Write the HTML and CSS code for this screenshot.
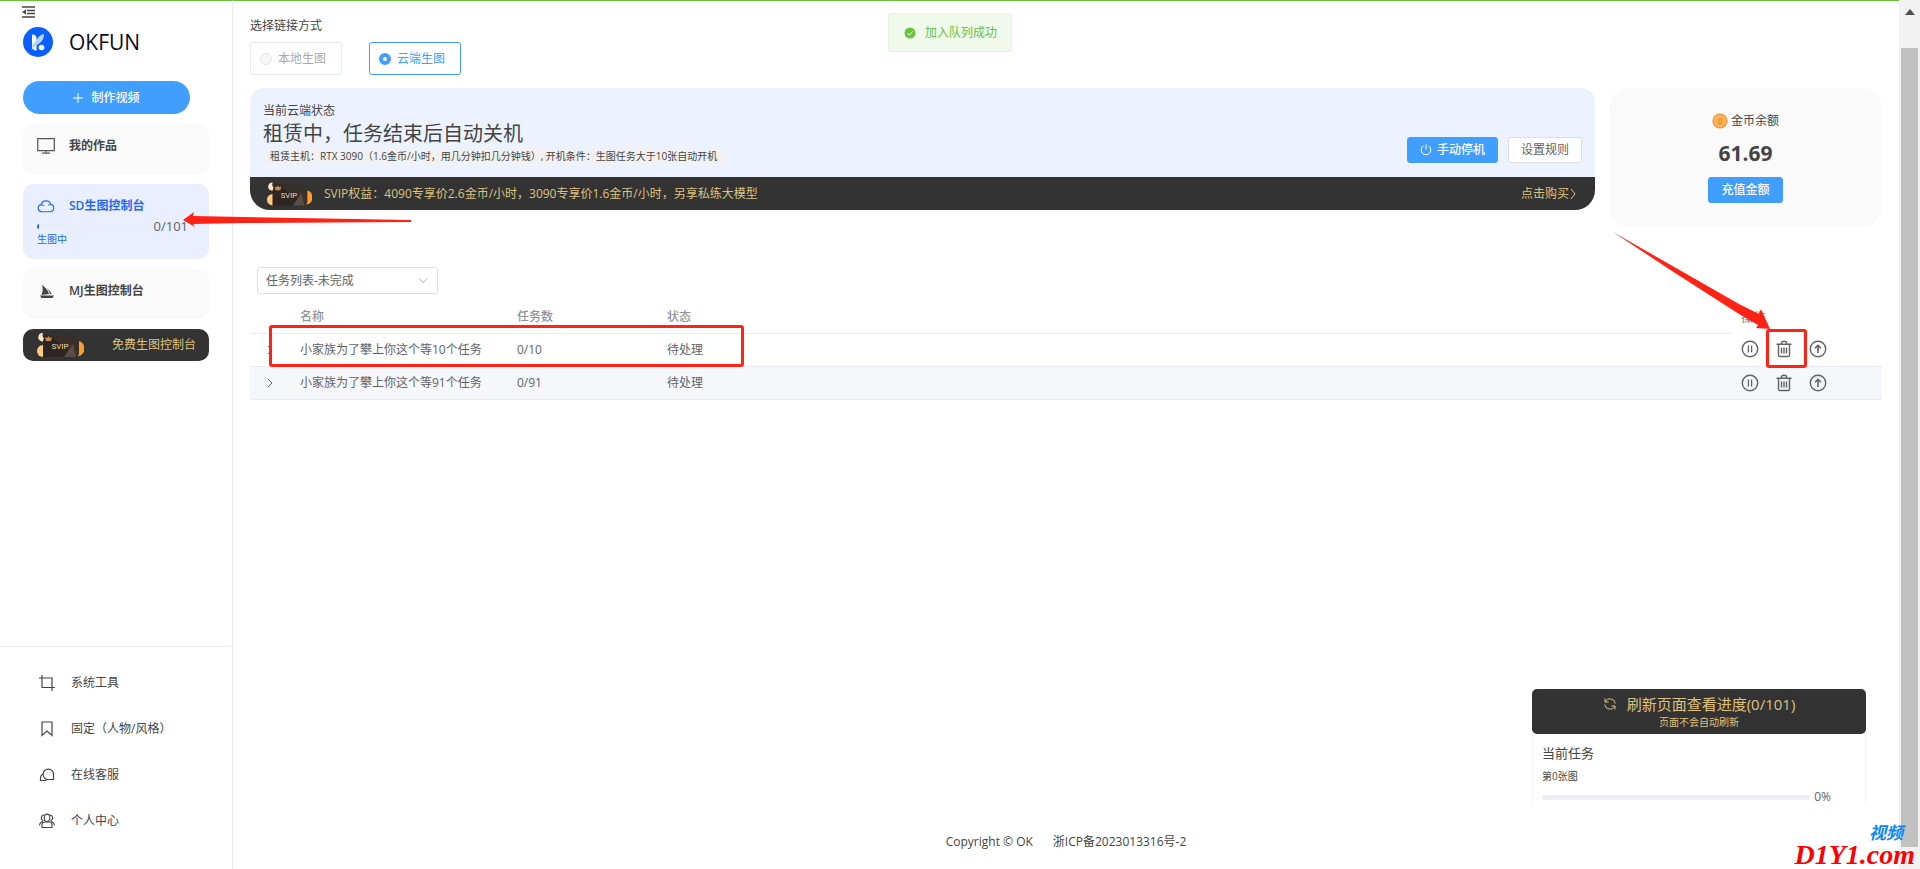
FILE: index.html
```html
<!DOCTYPE html>
<html lang="zh-CN">
<head>
<meta charset="utf-8">
<title>OKFUN</title>
<link rel="stylesheet" href="styles.css">
</head>
<body>
<svg width="0" height="0" class="defs" aria-hidden="true">
  <defs>
    <symbol id="svip" viewBox="0 0 48 26">
      <path d="M1 19a6 6 0 0 1 6-6v12a6 6 0 0 1-6-6z" fill="#ffcb7d"/>
      <path d="M7 1a4.200 4.200 0 1 0 3 6.500a4.500 4.500 0 0 1-3-6.500z" fill="#ffe3bd"/>
      <path d="M42 9a6 7 0 0 1 0 15z" fill="#ff9d2b"/>
      <path d="M9 3h29l5 6v13l-3 3H7V9z" fill="#2d2521"/>
      <path d="M14 3h24l5 6v13l-3 3z" fill="#3a302b"/>
      <path d="M37 12l-9 13h12z" fill="#5a4e48"/>
      <path d="M9 5l2 1 1.500-2 1.500 2 2-1-1 4H10z" fill="#c78b4a"/>
      <text x="24" y="17" text-anchor="middle" font-size="8" font-family="Roboto, sans-serif" fill="#f5d5a4">SVIP</text>
    </symbol>
    <symbol id="pause" viewBox="0 0 18 18">
      <g fill="none" stroke="#606266"><circle cx="9" cy="9" r="7.700" stroke-width="1.400"/><path d="M7.400 5.500v7M10.600 5.500v7" stroke-width="1.300"/></g>
    </symbol>
    <symbol id="trash" viewBox="0 0 18 18">
      <path d="M1.500 4.300h15M6.500 4V3a2.500 1.800 0 0 1 5 0V4M3.500 5v10.200a1.300 1.300 0 0 0 1.300 1.300h8.400a1.300 1.300 0 0 0 1.300-1.300V5M6.500 7.500v6M9 7.500v6M11.500 7.500v6" fill="none" stroke="#606266" stroke-width="1.400"/>
    </symbol>
    <symbol id="up" viewBox="0 0 18 18">
      <g fill="none" stroke="#606266"><circle cx="9" cy="9" r="7.700" stroke-width="1.400"/><path d="M9 13V5.500M6 8.300L9 5.300l3 3" stroke-width="1.600"/></g>
    </symbol>
  </defs>
</svg>
<div class="app">
  <aside class="sidebar">
    <button class="collapse" aria-label="收起菜单"><svg width="14" height="12" viewBox="0 0 14 12"><path d="M0 1h13M5 4.500h8M5 7.500h8M0 11h13" stroke="#444" stroke-width="1.400"/><path d="M0 6l4-2.500v5z" fill="#444"/></svg></button>
    <div class="brand">
      <svg width="30" height="30" viewBox="0 0 30 30"><circle cx="15" cy="15" r="15" fill="#0a5fff"/><path d="M9 7.500c2.500 0 4.500 1 4.500 3.500v12.500C10.500 23.500 9 22 9 20z" fill="#fff"/><path d="M21 7c0 6-3 9-11.500 14v-4C14 14 15 8 21 7z" fill="#b9d2ff"/><circle cx="18.500" cy="20.500" r="2.800" fill="#fff"/></svg>
      <span>OKFUN</span>
    </div>
    <button class="make"><svg width="10" height="10" viewBox="0 0 10 10"><path d="M5 0v10M0 5h10" stroke="#fff"/></svg>制作视频</button>
    <nav class="cards">
      <a class="card" href="#"><svg class="card-icon" width="18" height="16" viewBox="0 0 18 16"><path d="M.700.700h16.600v12H.700zM9 13v2M5 15.200h8" fill="none" stroke="#555" stroke-width="1.200"/></svg><span class="card-title">我的作品</span></a>
      <a class="card card-active" href="#">
        <svg class="card-icon" width="18" height="14" viewBox="0 0 18 14"><path d="M4.500 12.700a3.600 3.600 0 0 1-.500-7.100a5.200 5.200 0 0 1 9.900-.300a3.800 3.800 0 0 1-.200 7.400zM4 5.700a4 4 0 0 1 3 1.300M13.900 5.300a3 3 0 0 0-2.500 1" fill="none" stroke="#2468f2" stroke-width="1.100"/></svg><span class="card-title">SD生图控制台</span>
        <span class="queue"><span class="queue-track"><span class="queue-fill"></span></span>0/101</span>
        <span class="queue-state">生图中</span>
      </a>
      <a class="card" href="#"><svg class="card-icon" width="18" height="16" viewBox="0 0 18 16"><path d="M5 2c3 2 6 5 7 9L4.500 12C6 9 6 5 5 2zM10 5c2 2 4 4 4.500 6H13c-.500-2-1.500-4-3-6zM3 12.500h14L15.500 15h-11z" fill="#444"/></svg><span class="card-title">MJ生图控制台</span></a>
      <a class="free" href="#"><svg width="48" height="26"><use href="#svip"/></svg><span>免费生图控制台</span></a>
    </nav>
    <nav class="tools">
      <a href="#"><svg width="16" height="16" viewBox="0 0 16 16"><path d="M3 0v12.500h13M0 3h13V16" fill="none" stroke="#444" stroke-width="1.200"/></svg>系统工具</a>
      <a href="#"><svg width="16" height="16" viewBox="0 0 16 16"><path d="M3 1h10v13.500l-5-4.500-5 4.500z" fill="none" stroke="#444" stroke-width="1.200"/></svg>固定（人物/风格）</a>
      <a href="#"><svg width="16" height="16" viewBox="0 0 16 16"><path d="M14.500 12.500h-5.500a5.200 5.200 0 1 1 5.500-5.200zM4 7c-2 1-2.800 3-2.500 6.500h4.500c1 0 1.500-.500 2-1.200" fill="none" stroke="#444" stroke-width="1.200"/></svg>在线客服</a>
      <a href="#"><svg width="16" height="16" viewBox="0 0 16 16"><g fill="none" stroke="#444" stroke-width="1.100"><ellipse cx="8" cy="4.800" rx="2.800" ry="3.700"/><path d="M5.500 2a2.800 2.800 0 0 0-1 5.500M10.500 2a2.800 2.800 0 0 1 1 5.500M3 14.500V12a3 3 0 0 1 3-3h4a3 3 0 0 1 3 3v2.500zM.600 12.500c0-2 1-3.500 3.400-4M15.400 12.500c0-2-1-3.500-3.400-4"/></g></svg>个人中心</a>
    </nav>
  </aside>

  <main class="main">
    <div class="label" id="link-mode">选择链接方式</div>
    <div class="radios" role="radiogroup" aria-labelledby="link-mode">
      <label class="radio radio-off"><input type="radio" name="mode" disabled>本地生图</label>
      <label class="radio radio-on"><input type="radio" name="mode" checked>云端生图</label>
    </div>

    <div class="top">
      <section class="status">
        <div class="status-body">
          <div class="status-text">
            <p class="label">当前云端状态</p>
            <h1>租赁中，任务结束后自动关机</h1>
            <p class="host">租赁主机：RTX 3090（1.6金币/小时，用几分钟扣几分钟钱）, 开机条件：生图任务大于10张自动开机</p>
          </div>
          <div class="status-actions">
            <button class="btn btn-primary btn-stop"><svg width="12" height="12" viewBox="0 0 12 12"><path d="M6 .500v5M3.500 1.800a4.800 4.800 0 1 0 5 0" fill="none" stroke="#fff"/></svg>手动停机</button>
            <button class="btn">设置规则</button>
          </div>
        </div>
        <div class="svip-bar">
          <svg width="46" height="26"><use href="#svip"/></svg>
          <span>SVIP权益：4090专享价2.6金币/小时，3090专享价1.6金币/小时，另享私练大模型</span>
          <a href="#">点击购买<svg width="8" height="10" viewBox="0 0 8 10"><path d="M2 0l4 5-4 5" fill="none" stroke="#dfc27d"/></svg></a>
        </div>
      </section>
      <section class="coins">
        <div class="coins-label"><svg width="16" height="16" viewBox="0 0 16 16"><circle cx="8" cy="8" r="7.600" fill="#f7953b"/><circle cx="8" cy="8" r="5.500" fill="#ffad4d" stroke="#ffc777"/><text x="8" y="11" text-anchor="middle" font-size="8" font-family="Roboto, sans-serif" fill="#f07e1b">$</text></svg>金币余额</div>
        <strong>61.69</strong>
        <button class="btn btn-primary">充值金额</button>
      </section>
    </div>

    <div class="filter">
      <select aria-label="任务列表"><option>任务列表-未完成</option></select>
      <svg width="10" height="6" viewBox="0 0 10 6"><path d="M1 .500l4 4 4-4" fill="none" stroke="#a8abb2"/></svg>
    </div>

    <table class="tasks">
      <colgroup><col class="c-expand"><col class="c-name"><col class="c-count"><col><col class="c-ops"></colgroup>
      <thead><tr><th></th><th>名称</th><th>任务数</th><th>状态</th><th>操作</th></tr></thead>
      <tbody>
        <tr><td><button class="icon" aria-label="展开"><svg width="8" height="10" viewBox="0 0 8 10"><path d="M2 1l4 4-4 4" fill="none" stroke="#606266"/></svg></button></td><td>小家族为了攀上你这个等10个任务</td><td>0/10</td><td>待处理</td>
          <td><div class="ops"><button class="icon" aria-label="暂停"><svg width="18" height="18"><use href="#pause"/></svg></button><button class="icon" aria-label="删除"><svg width="18" height="18"><use href="#trash"/></svg></button><button class="icon" aria-label="置顶"><svg width="18" height="18"><use href="#up"/></svg></button></div></td></tr>
        <tr><td><button class="icon" aria-label="展开"><svg width="8" height="10" viewBox="0 0 8 10"><path d="M2 1l4 4-4 4" fill="none" stroke="#606266"/></svg></button></td><td>小家族为了攀上你这个等91个任务</td><td>0/91</td><td>待处理</td>
          <td><div class="ops"><button class="icon" aria-label="暂停"><svg width="18" height="18"><use href="#pause"/></svg></button><button class="icon" aria-label="删除"><svg width="18" height="18"><use href="#trash"/></svg></button><button class="icon" aria-label="置顶"><svg width="18" height="18"><use href="#up"/></svg></button></div></td></tr>
      </tbody>
    </table>

    <footer class="footer"><span>Copyright © OK</span><a href="#">浙ICP备2023013316号-2</a></footer>
  </main>

  <div class="scroll" aria-hidden="true">
    <svg width="10" height="6" viewBox="0 0 10 6"><path d="M0 6L5 0l5 6z" fill="#505050"/></svg>
    <div class="thumb"></div>
  </div>
</div>

<div class="toast" role="status"><svg width="12" height="12" viewBox="0 0 12 12"><circle cx="6" cy="6" r="5.500" fill="#67c23a"/><path d="M3.300 6.200l2 2 3.500-3.800" fill="none" stroke="#fff"/></svg>加入队列成功</div>

<section class="progress-panel">
  <button class="refresh"><span class="refresh-main"><svg width="14" height="14" viewBox="0 0 14 14"><path d="M2 1.500V5h3.500M2.300 4.800A5.300 5.300 0 0 1 12.300 6.500M12 12.500V9H8.500M11.700 9.200A5.300 5.300 0 0 1 1.700 7.500" fill="none" stroke="#dfc27d"/></svg>刷新页面查看进度(0/101)</span><small>页面不会自动刷新</small></button>
  <div class="panel-body">
    <h2>当前任务</h2>
    <p>第0张图</p>
    <div class="percent"><span class="percent-track"></span>0%</div>
  </div>
</section>

<div class="mark mark-row"></div>
<div class="mark mark-trash"></div>
<svg class="arrow arrow-left" width="230" height="16" viewBox="0 0 230 16"><path d="M0 8L11 0l-1 4 52 1 166 3v2L62 11l-52 1 2 3z" fill="#ff2315"/></svg>
<svg class="arrow arrow-right" width="160" height="100" viewBox="0 0 160 100"><path d="M1 1L127 73l20 10 2-5 9 20-14-1 2-3-19-11L60 40z" fill="#ff2315"/></svg>
<div class="watermark"><span class="wm-top">视频</span><span class="wm-main">D1Y1.com</span></div>
</body>
</html>
```
FILE: styles.css
```css
* { box-sizing: border-box; }
body {
  margin: 0;
  position: relative;
  background: #fff;
  color: #444;
  font-family: "Open Sans", "Noto Sans CJK SC", sans-serif;
  font-size: 12px;
  line-height: 16px;
  overflow: hidden;
}
a { color: inherit; text-decoration: none; }
p, h1, h2 { margin: 0; font-weight: 400; }
button, select { font: inherit; color: inherit; margin: 0; }
svg { display: block; flex: none; }
.defs { position: absolute; }

.app { display: flex; height: 100vh; }

.sidebar {
  width: 233px;
  flex: none;
  display: flex;
  flex-direction: column;
  border-right: 1px solid #e8ebf7;
  border-top: 1px solid #67c23a;
}
.collapse { margin: 5px 0 0 22px; padding: 0; border: 0; background: none; width: 14px; }
.brand { display: flex; align-items: center; gap: 16px; margin: 9px 0 0 23px; color: #0b0b20; font-size: 21px; line-height: 30px; }
.make {
  display: flex; align-items: center; justify-content: center; gap: 8px;
  width: 167px; height: 33px; margin: 24px 0 0 23px;
  border: 0; border-radius: 17px; background: #409eff; color: #fff; font-weight: 500;
}
.cards { display: flex; flex-direction: column; gap: 10px; margin: 10px 23px 0; }
.card {
  display: grid; grid-template-columns: 18px 1fr; column-gap: 14px;
  align-content: start; align-items: center;
  min-height: 50px; padding: 14px; border-radius: 10px; background: #fafafa;
}
.card-title { font-weight: 600; }
.card-active { min-height: 75px; background: #e9efff; color: #2468f2; }
.queue { grid-column: 1 / -1; display: flex; align-items: center; gap: 4px; margin-top: 4px; padding-right: 7px; color: #606266; font-size: 13px; line-height: 16px; }
.queue-track { flex: 1; height: 5px; background: #e8edfa; border-radius: 3px; overflow: hidden; }
.queue-fill { display: block; width: 2px; height: 100%; background: #2468f2; }
.queue-state { grid-column: 1 / -1; font-size: 10px; line-height: 10px; }
.free { display: flex; align-items: center; justify-content: space-between; height: 32px; padding: 0 13px; border-radius: 10px; background: #333; color: #dfc27d; }
.tools { margin-top: auto; display: flex; flex-direction: column; gap: 30px; padding: 28px 0 40px 39px; border-top: 1px solid #e8ebf7; }
.tools a { display: flex; align-items: center; gap: 16px; }

.main { flex: 1; min-width: 0; display: flex; flex-direction: column; padding: 17px 17px 0; border-top: 1px solid #67c23a; }
.radios { display: flex; gap: 27px; margin-top: 8px; }
.radio { display: flex; align-items: center; gap: 6px; width: 92px; height: 33px; padding-left: 9px; border: 1px solid #e4e7ed; border-radius: 3px; }
.radio input { appearance: none; width: 12px; height: 12px; margin: 0; border: 1px solid #e4e7ed; border-radius: 50%; background: #f5f7fa; }
.radio-off { color: #a8abb2; }
.radio-on { border-color: #409eff; color: #409eff; }
.radio-on input { border: 4px solid #409eff; background: #fff; }

.top { display: flex; align-items: flex-start; gap: 14px; margin-top: 13px; }
.status { flex: 1; min-width: 0; border-radius: 14px 14px 20px 20px; overflow: hidden; background: #ecf3ff; }
.status-body { display: flex; justify-content: space-between; align-items: flex-end; min-height: 89px; padding: 14px 13px; }
.status h1 { font-size: 20px; line-height: 30px; }
.host { width: fit-content; padding: 0 7px; background: #f1f1f1; font-size: 10px; line-height: 14px; }
.status-actions { display: flex; gap: 10px; }
.btn { display: inline-flex; align-items: center; justify-content: center; gap: 5px; height: 26px; padding: 0 12px; border: 1px solid #dcdfe6; border-radius: 3px; background: #fff; color: #606266; white-space: nowrap; }
.btn-primary { border-color: #409eff; background: #409eff; color: #fff; font-weight: 500; }
.btn-stop { min-width: 90px; }
.svip-bar { display: flex; align-items: center; gap: 12px; height: 33px; padding: 0 18px 0 16px; background: #333; color: #dfc27d; }
.svip-bar a { display: flex; align-items: center; margin-left: auto; }
.coins { display: flex; flex-direction: column; align-items: center; width: 273px; min-height: 139px; padding-top: 25px; border-radius: 20px; background: #fafafa; }
.coins-label { display: flex; align-items: center; gap: 3px; }
.coins strong { margin: 10px 0; font-size: 21px; line-height: 28px; }

.filter { position: relative; width: 181px; margin: 40px 0 0 7px; }
.filter select { display: block; width: 100%; height: 27px; padding: 0 8px; appearance: none; border: 1px solid #dcdfe6; border-radius: 3px; background: #fff; color: #606266; }
.filter svg { position: absolute; right: 10px; top: 11px; }

.tasks { width: 100%; margin-top: 8px; border-collapse: collapse; table-layout: fixed; color: #606266; }
.c-expand { width: 40px; }
.c-name { width: 217px; }
.c-count { width: 150px; }
.c-ops { width: 151px; }
.tasks th, .tasks td { height: 33px; padding: 0 10px; text-align: left; border-bottom: 1px solid #e8ebf5; }
.tasks th { height: 31px; color: #909399; font-weight: 500; }
.tasks th:last-child { border-bottom: 0; }
.tasks td:first-child { padding: 0 16px; }
.tasks tbody tr:nth-child(2) { background: #f5f7fa; }
.icon { display: block; padding: 0; border: 0; background: none; }
.ops { display: flex; gap: 16px; }

.footer { display: flex; justify-content: center; gap: 20px; margin-top: auto; padding-bottom: 19px; }

.scroll { width: 21px; flex: none; display: flex; flex-direction: column; align-items: center; padding: 9px 0 22px; background: #f1f1f1; }
.thumb { flex: 1; width: 17px; margin-top: 33px; background: #c1c1c1; }

.toast {
  position: absolute; left: 50%; top: 13px; transform: translateX(-50%);
  margin-left: -10px; display: flex; align-items: center; gap: 9px;
  width: 124px; height: 39px; padding-left: 15px;
  border: 1px solid #e1f3d8; border-radius: 3px; background: #f0f9eb; color: #67c23a; white-space: nowrap;
}

.progress-panel { position: absolute; right: 54px; bottom: 64px; width: 334px; }
.refresh { display: flex; flex-direction: column; align-items: center; width: 100%; height: 45px; padding: 4px 0 0; border: 0; border-radius: 5px; background: #333; color: #dfc27d; }
.refresh-main { display: flex; align-items: center; gap: 10px; font-size: 15px; line-height: 22px; }
.refresh small { font-size: 10px; line-height: 14px; }
.panel-body { padding: 10px 34px 0 9px; min-height: 71px; border: solid #f3f3f3; border-width: 0 1px; }
.panel-body h2 { font-size: 13px; line-height: 18px; }
.panel-body p { margin-top: 7px; font-size: 10px; line-height: 14px; }
.percent { display: flex; align-items: center; gap: 4px; margin-top: 6px; color: #606266; }
.percent-track { flex: 1; height: 5px; border-radius: 3px; background: #ebeef5; }

.mark { position: absolute; border: 3px solid #ff2315; border-radius: 3px; }
.mark-row { left: 269px; top: 325px; width: 475px; height: 42px; }
.mark-trash { right: 113px; top: 329px; width: 41px; height: 39px; }
.arrow { position: absolute; }
.arrow-left { left: 183px; top: 212px; }
.arrow-right { right: 148px; top: 231px; }
.watermark { position: absolute; right: 5px; bottom: 2px; display: flex; flex-direction: column; align-items: flex-end; font-family: "Liberation Serif", "Noto Sans CJK SC", serif; font-style: italic; font-weight: 700; }
.wm-top { padding-right: 12px; color: #0a84ff; font-size: 17px; line-height: 18px; }
.wm-main { color: #f00; font-size: 28px; line-height: 24px; }
```
